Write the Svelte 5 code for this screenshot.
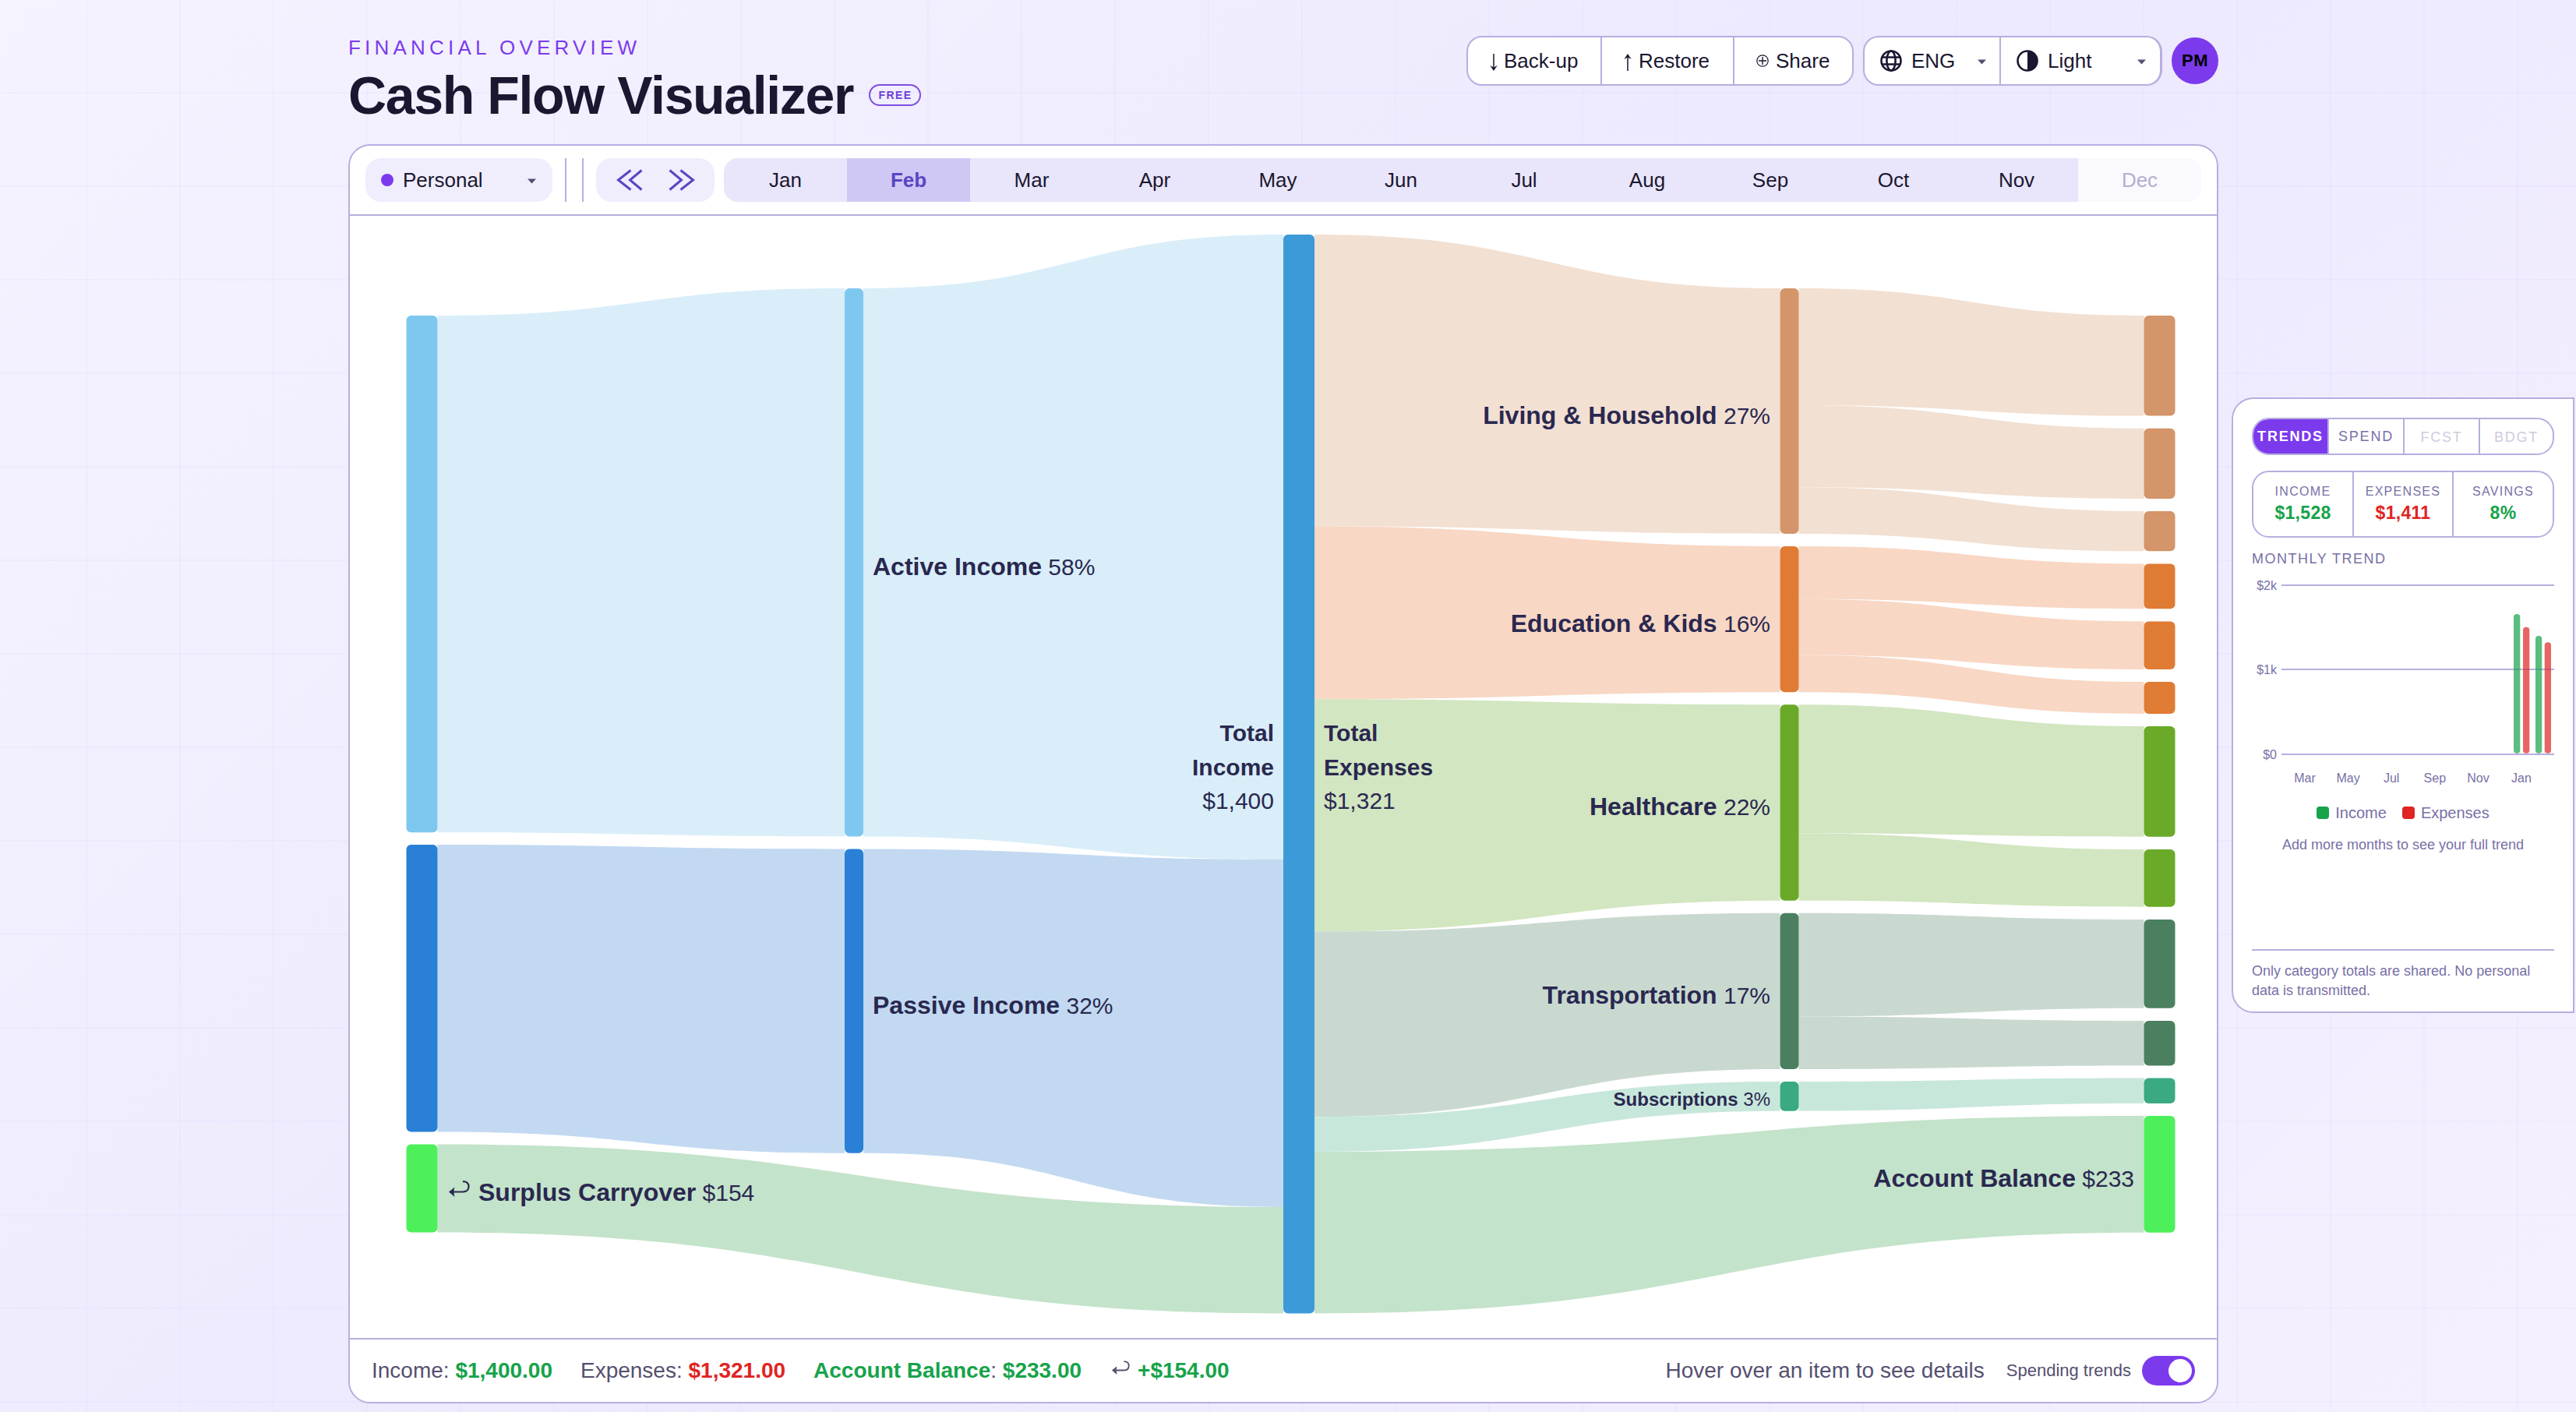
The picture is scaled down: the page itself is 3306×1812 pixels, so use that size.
<script>
  const months = ["Jan", "Feb", "Mar", "Apr", "May", "Jun", "Jul", "Aug", "Sep", "Oct", "Nov", "Dec"];
  const currentMonth = "Feb";

  // chart area starts at the left inner edge and below the toolbar line
  const originX = 449;
  const originY = 277;

  const nodes = [
    { x: 521.5, w: 40, y: 405, b: 1068.3, color: "#7ec8f0" },
    { x: 521.5, w: 40, y: 1084, b: 1452.5, color: "#2980d6" },
    { x: 521.5, w: 40, y: 1468.5, b: 1581.5, color: "#4df05a" },
    { x: 1084, w: 24, y: 370, b: 1073.5, color: "#7ec8f0" },
    { x: 1084, w: 24, y: 1089.5, b: 1479.8, color: "#2980d6" },
    { x: 1647, w: 40, y: 301, b: 1685.5, color: "#3d9ad8" },
    { x: 2284.5, w: 24, y: 370, b: 685, color: "#d4956a" },
    { x: 2284.5, w: 24, y: 701, b: 888.2, color: "#e07b34" },
    { x: 2284.5, w: 24, y: 904.3, b: 1155.7, color: "#6aaa28" },
    { x: 2284.5, w: 24, y: 1171.8, b: 1372, color: "#4a8060" },
    { x: 2284.5, w: 24, y: 1388, b: 1425.7, color: "#3aaa80" },
    { x: 2751.5, w: 40, y: 405, b: 533.6, color: "#d4956a" },
    { x: 2751.5, w: 40, y: 549.7, b: 640, color: "#d4956a" },
    { x: 2751.5, w: 40, y: 656, b: 707.3, color: "#d4956a" },
    { x: 2751.5, w: 40, y: 723.4, b: 781.3, color: "#e07b34" },
    { x: 2751.5, w: 40, y: 797.4, b: 859, color: "#e07b34" },
    { x: 2751.5, w: 40, y: 875, b: 916, color: "#e07b34" },
    { x: 2751.5, w: 40, y: 932, b: 1073.7, color: "#6aaa28" },
    { x: 2751.5, w: 40, y: 1090, b: 1163.7, color: "#6aaa28" },
    { x: 2751.5, w: 40, y: 1180, b: 1293.7, color: "#4a8060" },
    { x: 2751.5, w: 40, y: 1310, b: 1367.5, color: "#4a8060" },
    { x: 2751.5, w: 40, y: 1383.6, b: 1416, color: "#3aaa80" },
    { x: 2751.5, w: 40, y: 1432, b: 1581.7, color: "#4df05a" },
  ];

  // [x0, top0, bottom0, x1, top1, bottom1, color]
  const links = [
    [561.5, 405, 1068.3, 1084, 370, 1073.5, "#d9eef9"],
    [561.5, 1084, 1452.5, 1084, 1089.5, 1479.8, "#c2d9f1"],
    [561.5, 1468.5, 1581.5, 1647, 1549, 1685.5, "#c3e3ca"],
    [1108, 370, 1073.5, 1647, 301, 1103, "#d9eef9"],
    [1108, 1089.5, 1479.8, 1647, 1103, 1549, "#c2d9f1"],
    [1687, 301, 675.3, 2284.5, 370, 685, "#f2e0d2"],
    [1687, 675.3, 897.3, 2284.5, 701, 888.2, "#f8d7c4"],
    [1687, 897.3, 1195.4, 2284.5, 904.3, 1155.7, "#d2e6c1"],
    [1687, 1195.4, 1433.2, 2284.5, 1171.8, 1372, "#c9d9d0"],
    [1687, 1433.2, 1478, 2284.5, 1388, 1425.7, "#c8e7db"],
    [1687, 1478, 1685.5, 2751.5, 1432, 1581.7, "#c3e3ca"],
    [2308.5, 370, 520, 2751.5, 405, 533.6, "#f2e0d2"],
    [2308.5, 520, 625.2, 2751.5, 549.7, 640, "#f2e0d2"],
    [2308.5, 625.2, 685, 2751.5, 656, 707.3, "#f2e0d2"],
    [2308.5, 701, 768.7, 2751.5, 723.4, 781.3, "#f8d7c4"],
    [2308.5, 768.7, 840.4, 2751.5, 797.4, 859, "#f8d7c4"],
    [2308.5, 840.4, 888.2, 2751.5, 875, 916, "#f8d7c4"],
    [2308.5, 904.3, 1069.5, 2751.5, 932, 1073.7, "#d2e6c1"],
    [2308.5, 1069.5, 1155.7, 2751.5, 1090, 1163.7, "#d2e6c1"],
    [2308.5, 1171.8, 1304.6, 2751.5, 1180, 1293.7, "#c9d9d0"],
    [2308.5, 1304.6, 1372, 2751.5, 1310, 1367.5, "#c9d9d0"],
    [2308.5, 1388, 1425.7, 2751.5, 1383.6, 1416, "#c8e7db"],
  ];

  const labels = [
    { x: 1120, y: 738, name: "Active Income", value: "58%" },
    { x: 1120, y: 1301, name: "Passive Income", value: "32%" },
    { x: 614, y: 1541, name: "Surplus Carryover", value: "$154" },
    { x: 2272, y: 544, name: "Living & Household", value: "27%", end: true },
    { x: 2272, y: 811, name: "Education & Kids", value: "16%", end: true },
    { x: 2272, y: 1046, name: "Healthcare", value: "22%", end: true },
    { x: 2272, y: 1288, name: "Transportation", value: "17%", end: true },
    { x: 2272, y: 1418.5, name: "Subscriptions", value: "3%", end: true, small: true },
    { x: 2739, y: 1523, name: "Account Balance", value: "$233", end: true },
  ];

  const stats = [
    { label: "INCOME", value: "$1,528", tone: "pos" },
    { label: "EXPENSES", value: "$1,411", tone: "neg" },
    { label: "SAVINGS", value: "8%", tone: "pos" },
  ];

  const axis = [
    { label: "$2k", y: 11 },
    { label: "$1k", y: 119 },
    { label: "$0", y: 228 },
  ];
  const bars = [
    { x: 336, top: 48, color: "#16a34a" },
    { x: 348, top: 64.7, color: "#e02424" },
    { x: 364, top: 76, color: "#16a34a" },
    { x: 375.7, top: 84.3, color: "#e02424" },
  ];
  const ticks = ["Mar", "May", "Jul", "Sep", "Nov", "Jan"];

  function linkPath([x0, t0, b0, x1, t1, b1]) {
    const m = (x0 + x1) / 2;
    return `M${x0},${t0}C${m},${t0} ${m},${t1} ${x1},${t1}V${b1}C${m},${b1} ${m},${b0} ${x0},${b0}Z`;
  }
</script>

{#snippet caret()}
  <svg class="caret" width="11" height="7" viewBox="0 0 11 7"><path d="M0 0.5H11L5.5 6.5Z" fill="currentColor" /></svg>
{/snippet}

{#snippet hook()}
  <svg class="hook" width="27" height="22" viewBox="0 0 27 22">
    <path d="M18 1.2C23.5 1.2 25.5 4 25.5 7.5C25.5 11.5 23 14.5 18 14.5H5" fill="none" stroke="currentColor" stroke-width="2.2" />
    <path d="M0 14.5L7.5 8.5Q5.5 14.5 7.5 21Z" fill="currentColor" />
  </svg>
{/snippet}

<div class="page">
  <main>
    <header>
      <div>
        <p class="eyebrow">FINANCIAL OVERVIEW</p>
        <div class="title-row">
          <h1>Cash Flow Visualizer</h1>
          <span class="free">FREE</span>
        </div>
      </div>
      <div class="actions">
        <div class="group">
          <button class="backup">
            <svg class="arrow" width="10" height="22" viewBox="0 0 10 22"><path d="M5 0V19" fill="none" stroke="currentColor" stroke-width="1.5" /><path d="M0.3 15L5 17.5L9.7 15L5 22Z" fill="currentColor" /></svg>
            Back-up
          </button>
          <button class="restore">
            <svg class="arrow" width="10" height="22" viewBox="0 0 10 22"><path d="M5 3V22" fill="none" stroke="currentColor" stroke-width="1.5" /><path d="M0.3 7L5 4.5L9.7 7L5 0Z" fill="currentColor" /></svg>
            Restore
          </button>
          <button class="share">
            <svg width="16" height="16" viewBox="0 0 16 16"><path d="M8 3V13M3 8H13" stroke="currentColor" stroke-width="1.4" /><circle cx="8" cy="8" r="7.2" fill="none" stroke="currentColor" stroke-width="1.2" /></svg>
            Share
          </button>
        </div>
        <div class="group selects">
          <button class="lang">
            <svg width="28" height="28" viewBox="0 0 28 28" fill="none" stroke="currentColor" stroke-width="2.6">
              <circle cx="14" cy="14" r="12.5" />
              <ellipse cx="14" cy="14" rx="5.600" ry="12.5" />
              <path d="M2.5 9.5H25.5M2.5 18.5H25.5" />
            </svg>
            <span>ENG</span>
            {@render caret()}
          </button>
          <button class="theme">
            <svg width="28" height="28" viewBox="0 0 28 28">
              <circle cx="14" cy="14" r="12.5" fill="none" stroke="currentColor" stroke-width="2.6" />
              <path d="M14 1.5A12.5 12.5 0 0 1 14 26.5Z" fill="currentColor" />
            </svg>
            <span>Light</span>
            {@render caret()}
          </button>
        </div>
        <div class="avatar">PM</div>
      </div>
    </header>

    <section class="card">
      <div class="toolbar">
        <button class="profile">
          <span class="dot"></span>
          <span>Personal</span>
          {@render caret()}
        </button>
        <span class="rule first"></span>
        <span class="rule second"></span>
        <div class="pager">
          <svg width="34" height="28" viewBox="0 0 34 28"><path d="M18.5 1.5L2.5 14L18.5 26.5M32.5 1.5L17.5 14L32.5 26.5" /></svg>
          <svg width="34" height="28" viewBox="0 0 34 28"><path d="M1.5 1.5L16.5 14L1.5 26.5M15.5 1.5L31.5 14L15.5 26.5" /></svg>
        </div>
        <div class="months">
          {#each months as month}
            <span class:active={month === currentMonth} class:muted={month === "Dec"}>{month}</span>
          {/each}
        </div>
      </div>

      <div class="chart">
        <svg width="2396" height="1440" viewBox="{originX} {originY} 2396 1440">
          {#each links as link}
            <path d={linkPath(link)} fill={link[6]} />
          {/each}
          {#each nodes as node}
            <rect x={node.x} y={node.y} width={node.w} height={node.b - node.y} rx="6" fill={node.color} />
          {/each}
          {#each labels as label}
            <text x={label.x} y={label.y} class="label" class:small={label.small} text-anchor={label.end ? "end" : "start"}><tspan class="name">{label.name}</tspan><tspan class="value">&nbsp;{label.value}</tspan></text>
          {/each}
          <g class="label total" text-anchor="end">
            <text x="1635" y="950.5" class="name">Total</text>
            <text x="1635" y="994.5" class="name">Income</text>
            <text x="1635" y="1037.5">$1,400</text>
          </g>
          <g class="label total">
            <text x="1699" y="950.5" class="name">Total</text>
            <text x="1699" y="994.5" class="name">Expenses</text>
            <text x="1699" y="1037.5">$1,321</text>
          </g>
          <g class="label" transform="translate(576 1515)">{@render hook()}</g>
        </svg>
      </div>

      <footer>
        <span>Income: <b class="pos">$1,400.00</b></span>
        <span>Expenses: <b class="neg">$1,321.00</b></span>
        <span><b class="pos">Account Balance</b>: <b class="pos">$233.00</b></span>
        <span class="carry">{@render hook()}<b class="pos">+$154.00</b></span>
        <span class="hint">Hover over an item to see details</span>
        <span class="toggle-label">Spending trends</span>
        <span class="toggle"><i></i></span>
      </footer>
    </section>
  </main>

  <aside>
    <div class="tabs">
      <span class="on">TRENDS</span>
      <span>SPEND</span>
      <span class="off">FCST</span>
      <span class="off">BDGT</span>
    </div>
    <div class="stats">
      {#each stats as stat}
        <div>
          <small>{stat.label}</small>
          <b class={stat.tone}>{stat.value}</b>
        </div>
      {/each}
    </div>
    <h2>MONTHLY TREND</h2>
    <svg class="trend" width="388" height="270" viewBox="0 0 388 270">
      {#each axis as row}
        <line x1="38" x2="388" y1={row.y} y2={row.y} stroke="#b8aee0" stroke-width="2" />
        <text x="32" y={row.y + 5.5} text-anchor="end">{row.label}</text>
      {/each}
      {#each bars as bar}
        <rect x={bar.x} y={bar.top} width="8.300" height={226.7 - bar.top} rx="4" fill={bar.color} opacity="0.7" />
      {/each}
      {#each ticks as tick, i}
        <text x={68 + i * 55.6} y="264" text-anchor="middle">{tick}</text>
      {/each}
    </svg>
    <div class="legend">
      <span><i class="income"></i>Income</span>
      <span><i class="expenses"></i>Expenses</span>
    </div>
    <p class="more">Add more months to see your full trend</p>
    <p class="privacy">Only category totals are shared. No personal data is transmitted.</p>
  </aside>
</div>

<style>
  :global(body) {
    font-family: "Liberation Sans", Helvetica, Arial, sans-serif;
    color: #1a1730;
    overflow: hidden;
  }

  .page {
    box-sizing: border-box;
    width: 3306px;
    height: 1812px;
    padding-left: 447px;
    display: flex;
    align-items: flex-start;
    gap: 17px;
    background-color: #f5f3ff;
    background-image:
      linear-gradient(90deg, #7c3aed08 2px, transparent 2px),
      linear-gradient(180deg, #7c3aed08 2px, transparent 2px),
      linear-gradient(135deg, #f5f3ff 0%, #ede9fe 50%, #f5f0ff 100%);
    background-size: 120px 120px, 120px 120px, 100% 100%;
    background-position: 110px 0, 0 118px, 0 0;
  }

  main {
    width: 2400px;
    flex: none;
  }

  button {
    font: inherit;
    color: inherit;
    background: none;
    border: 0;
    padding: 0;
  }

  header {
    height: 185px;
    display: flex;
    justify-content: space-between;
    align-items: flex-start;
  }

  .eyebrow {
    margin: 46px 0 0;
    font-size: 26px;
    line-height: 30px;
    letter-spacing: 5.2px;
    color: #7c3aed;
  }

  .title-row {
    display: flex;
    align-items: center;
    gap: 20px;
  }

  h1 {
    margin: 8px 0 0;
    font-size: 68px;
    line-height: 76px;
    letter-spacing: -1.36px;
  }

  .free {
    box-sizing: border-box;
    width: 67px;
    height: 28px;
    margin-top: 8px;
    border: 2px solid #7c4fe0;
    border-radius: 14px;
    font-size: 14px;
    line-height: 25px;
    font-weight: bold;
    letter-spacing: 1.4px;
    text-indent: 1px;
    text-align: center;
    color: #6d3fd6;
  }

  .actions {
    display: flex;
    align-items: center;
    padding-top: 46px;
    font-size: 26px;
  }

  .group {
    box-sizing: border-box;
    height: 64px;
    display: flex;
    background: #fff;
    border: 2px solid #b8aee0;
    border-radius: 20px;
    margin-right: 12px;
    width: 497px;
  }

  .group button {
    box-sizing: border-box;
    display: flex;
    align-items: center;
    padding-left: 28px;
  }

  .group button + button {
    border-left: 2px solid #b8aee0;
  }

  .arrow {
    margin-top: 4px;
  }

  .backup {
    width: 170px;
    gap: 8px;
  }

  .restore {
    width: 170px;
    gap: 9px;
  }

  .share {
    gap: 9px;
  }

  .group.selects {
    width: 384px;
    border-right-width: 3px;
  }

  .group .lang {
    width: 173px;
    padding: 0 17px 0 20px;
  }

  .group .theme {
    flex: 1;
    padding: 0 18px 0 20px;
  }

  .selects svg:first-child {
    margin-right: 12px;
  }

  .caret {
    margin-left: auto;
    margin-top: 3px;
    color: #55506f;
  }

  .avatar {
    width: 60px;
    height: 60px;
    border-radius: 50%;
    background: #7c3aed;
    color: #000;
    font-size: 22px;
    font-weight: bold;
    line-height: 60px;
    letter-spacing: 0.4px;
    text-align: center;
  }

  .card {
    box-sizing: border-box;
    height: 1616px;
    background: #fff;
    border: 2px solid #b8aee0;
    border-radius: 28px;
    overflow: hidden;
  }

  .toolbar {
    height: 90px;
    box-sizing: border-box;
    padding: 16px 20px 0 20px;
    display: flex;
    font-size: 26px;
    line-height: 56px;
    border-bottom: 2px solid #b8aee0;
  }

  .profile {
    box-sizing: border-box;
    width: 240px;
    height: 56px;
    padding: 0 21px 0 20px;
    display: flex;
    align-items: center;
    gap: 12px;
    background: #f0edfc;
    border-radius: 20px;
  }

  .dot {
    width: 16px;
    height: 16px;
    border-radius: 50%;
    background: #7c3aed;
  }

  .rule {
    width: 2px;
    height: 56px;
    background: #b8aee0;
  }

  .first {
    margin: 0 20px 0 16px;
  }

  .second {
    margin-right: 16px;
  }

  .pager {
    width: 152px;
    height: 56px;
    margin-right: 12px;
    display: flex;
    align-items: center;
    justify-content: center;
    gap: 33px;
    background: #f0edfc;
    border-radius: 20px;
  }

  .pager path {
    fill: none;
    stroke: #5b45c4;
    stroke-width: 3;
  }

  .months {
    flex: 1;
    height: 56px;
    display: grid;
    grid-template-columns: repeat(12, 1fr);
    text-align: center;
    border-radius: 18px;
    overflow: hidden;
  }

  .months span {
    background: #e9e5fa;
  }

  .months .active {
    background: #d0c8f4;
    color: #5b45c4;
    font-weight: bold;
  }

  .months .muted {
    background: #faf9fe;
    color: #b3aed0;
  }

  .chart {
    height: 1440px;
  }

  .chart > svg {
    display: block;
  }

  .label {
    color: #2a2850;
    fill: #2a2850;
    font-size: 32px;
  }

  .label .name {
    font-weight: bold;
  }

  .label .value,
  .total {
    font-size: 30px;
  }

  .label.small,
  .small .value {
    font-size: 24px;
  }

  footer {
    box-sizing: border-box;
    height: 82px;
    padding: 0 28px;
    display: flex;
    align-items: center;
    gap: 36px;
    border-top: 2px solid #b8aee0;
    font-size: 28px;
    color: #55506f;
  }

  .carry {
    display: flex;
    align-items: center;
    gap: 10px;
    padding-left: 3px;
  }

  .carry .hook {
    width: 23px;
    height: 19px;
    margin-top: -8px;
  }

  .hint {
    margin-left: auto;
  }

  .toggle-label {
    margin-left: -8px;
    font-size: 22px;
  }

  .toggle {
    box-sizing: border-box;
    width: 68px;
    height: 38px;
    margin-left: -22px;
    padding: 4px;
    display: flex;
    justify-content: flex-end;
    border-radius: 19px;
    background: #7c3aed;
  }

  .toggle i {
    width: 30px;
    height: 30px;
    border-radius: 50%;
    background: #fff;
  }

  .pos {
    color: #16a34a;
  }

  .neg {
    color: #e02424;
  }

  aside {
    box-sizing: border-box;
    width: 440px;
    height: 790px;
    margin-top: 510px;
    padding: 24px;
    display: flex;
    flex-direction: column;
    background: #fff;
    border: 2px solid #b8aee0;
    border-radius: 28px 0 0 28px;
    color: #7770a6;
  }

  .tabs {
    box-sizing: border-box;
    height: 48px;
    display: grid;
    grid-template-columns: 95px 97px 97px 1fr;
    border: 2px solid #b8aee0;
    border-radius: 22px;
    overflow: hidden;
    font-size: 18px;
    line-height: 45px;
    letter-spacing: 1.8px;
    text-align: center;
  }

  .tabs span + span {
    border-left: 2px solid #b8aee0;
  }

  .tabs .on {
    background: #7c3aed;
    color: #fff;
    font-weight: bold;
  }

  .tabs .off {
    color: #cfcbe0;
    line-height: 47px;
  }

  .stats {
    box-sizing: border-box;
    height: 86px;
    margin-top: 20px;
    display: grid;
    grid-template-columns: 127px 128px 1fr;
    border: 2px solid #b8aee0;
    border-radius: 22px;
    text-align: center;
  }

  .stats div {
    padding-top: 15px;
  }

  .stats div + div {
    border-left: 2px solid #b8aee0;
  }

  .stats small {
    display: block;
    font-size: 16px;
    line-height: 20px;
    letter-spacing: 1.3px;
  }

  .stats b {
    display: block;
    font-size: 23px;
    line-height: 34px;
    letter-spacing: 0.3px;
  }

  h2 {
    margin: 16px 0 0;
    font-size: 18px;
    font-weight: normal;
    line-height: 22px;
    letter-spacing: 1.5px;
  }

  .trend {
    display: block;
    flex: none;
    margin-top: 12px;
    font-size: 16px;
    fill: #7770a6;
  }

  .legend {
    display: flex;
    justify-content: center;
    gap: 20px;
    margin-top: 22px;
    font-size: 20px;
    line-height: 22px;
  }

  .legend span {
    display: flex;
    align-items: center;
  }

  .legend i {
    width: 16px;
    height: 16px;
    margin-right: 8px;
    border-radius: 4px;
  }

  .income {
    background: #16a34a;
  }

  .expenses {
    background: #e02424;
  }

  .more {
    margin: 18px 0 0;
    font-size: 18px;
    line-height: 24px;
    text-align: center;
  }

  .privacy {
    margin: auto 0 -10px;
    padding-top: 14px;
    border-top: 2px solid #b8aee0;
    font-size: 18px;
    line-height: 25px;
  }
</style>
